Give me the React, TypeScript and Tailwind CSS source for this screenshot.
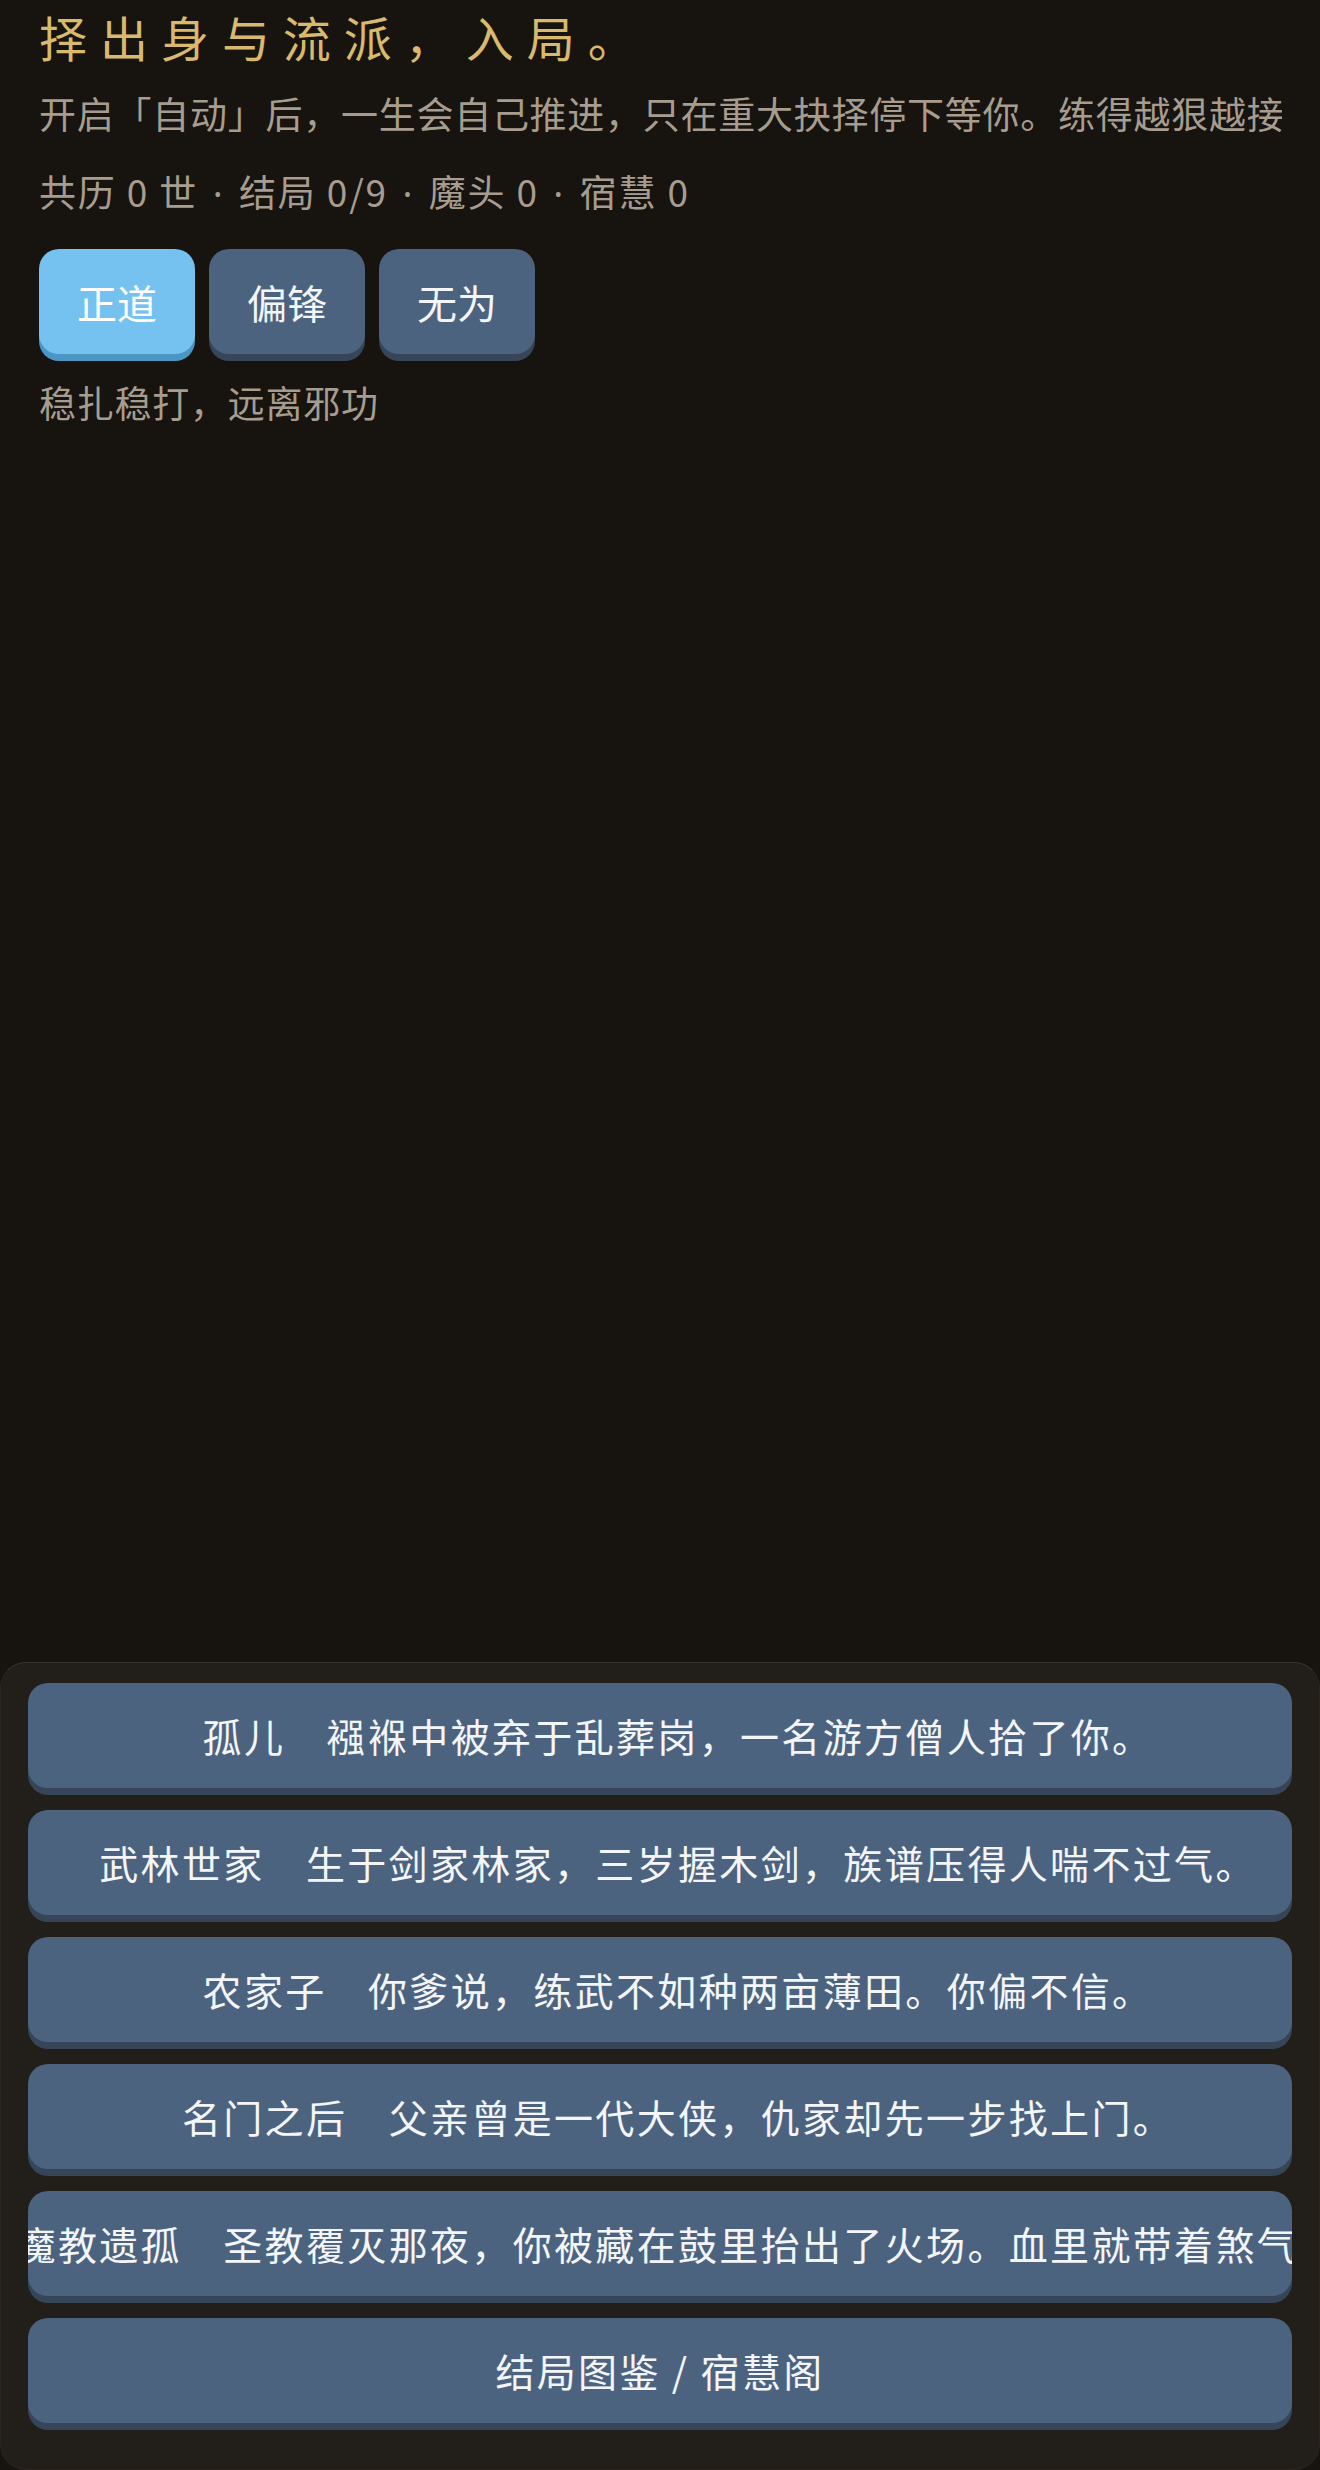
import { useState } from 'react'

const schools = [
  { id: 'zheng', label: '正道', desc: '稳扎稳打，远离邪功' },
  { id: 'pian', label: '偏锋', desc: '剑走偏锋，险中求胜' },
  { id: 'wu', label: '无为', desc: '顺其自然，不争不抢' },
]

const origins = [
  { name: '孤儿', text: '襁褓中被弃于乱葬岗，一名游方僧人拾了你。' },
  { name: '武林世家', text: '生于剑家林家，三岁握木剑，族谱压得人喘不过气。' },
  { name: '农家子', text: '你爹说，练武不如种两亩薄田。你偏不信。' },
  { name: '名门之后', text: '父亲曾是一代大侠，仇家却先一步找上门。' },
  { name: '魔教遗孤', text: '圣教覆灭那夜，你被藏在鼓里抬出了火场。血里就带着煞气。' },
]

const stats = [
  ['共历', '0', '世'],
  ['结局', '0/9'],
  ['魔头', '0'],
  ['宿慧', '0'],
]

export default function App() {
  const [school, setSchool] = useState('zheng')
  const current = schools.find((s) => s.id === school)

  return (
    <div className="min-h-screen flex flex-col bg-[#17130f] font-['Noto_Sans_CJK_SC',sans-serif]">
      {/* Intro */}
      <div className="pl-[39px] pr-[38px]">
        <h1 className="text-[48px] leading-[72px] tracking-[0.27em] text-[#d8b96d] font-normal">
          择出身与流派，入局。
        </h1>
        <p className="mt-[14px] text-[37px] leading-[54px] tracking-[0.02em] text-[#a69d8f] whitespace-nowrap overflow-hidden">
          开启「自动」后，一生会自己推进，只在重大抉择停下等你。练得越狠越接
        </p>
        <p className="mt-[24px] text-[37px] leading-[54px] tracking-[0.05em] text-[#a69d8f] whitespace-nowrap">
          {stats.map((s, i) => (
            <span key={i}>
              {i > 0 && <span className="mx-[3px] font-['Noto_Sans',sans-serif]"> · </span>}
              {s.join(' ')}
            </span>
          ))}
        </p>

        <div className="mt-[29px] flex gap-[14px]">
          {schools.map((s) => (
            <button
              key={s.id}
              onClick={() => setSchool(s.id)}
              className={
                s.id === school
                  ? 'h-[105px] px-[38px] rounded-[20px] bg-[#75c1f0] shadow-[0_7px_0_#4c96c6] text-[40px] text-white'
                  : 'h-[105px] px-[38px] rounded-[20px] bg-[#4c6380] shadow-[0_7px_0_#364558] text-[40px] text-[#f3f5f8]'
              }
            >
              {s.label}
            </button>
          ))}
        </div>

        <p className="mt-[21px] text-[37px] leading-[54px] tracking-[0.02em] text-[#a69d8f]">
          {current?.desc}
        </p>
      </div>

      {/* Origin picker */}
      <div className="mt-auto rounded-[26px] border border-[#2a251f] border-t-[#3b342b] bg-[#221e19] px-[27px] pt-[20px] pb-[46px] flex flex-col gap-[22px]">
        {origins.map((o) => (
          <button
            key={o.name}
            className="h-[105px] rounded-[20px] bg-[#4c6380] shadow-[0_7px_0_#364558] flex items-center justify-center overflow-hidden text-[39px] tracking-[0.06em] text-[#f3f5f8]"
          >
            <span className="pl-[36px] whitespace-nowrap shrink-0">
              {o.name}　{o.text}
            </span>
          </button>
        ))}
        <button className="h-[105px] rounded-[20px] bg-[#4c6380] shadow-[0_7px_0_#364558] flex items-center justify-center text-[39px] tracking-[0.06em] text-[#f3f5f8]">
          结局图鉴 / 宿慧阁
        </button>
      </div>
    </div>
  )
}
